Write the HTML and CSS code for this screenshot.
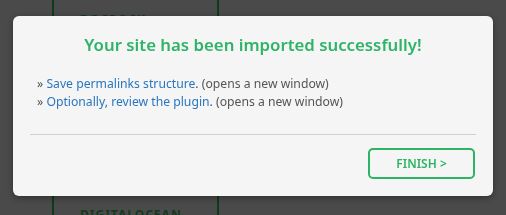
FILE: index.html
```html
<!DOCTYPE html>
<html>
<head>
<meta charset="utf-8">
<link rel="stylesheet" href="styles.css">
</head>
<body>
<div class="page">
  <div class="column">
    <div class="column-title top">DOCROCK</div>
    <div class="column-title bottom">DIGITALOCEAN</div>
  </div>
</div>
<div class="overlay">
  <div class="modal">
    <h2 class="modal-title">Your site has been imported successfully!</h2>
    <ul class="steps">
      <li>» <a href="#">Save permalinks structure</a>. (opens a new window)</li>
      <li>» <a href="#">Optionally, review the plugin</a>. (opens a new window)</li>
    </ul>
    <hr class="divider">
    <div class="actions">
      <button class="finish">FINISH &gt;</button>
    </div>
  </div>
</div>
</body>
</html>
```
FILE: styles.css
```css
html, body {
  margin: 0;
  padding: 0;
  height: 100%;
}
body {
  background: #4a4a4a;
  font-family: "Noto Sans", "Open Sans", sans-serif;
  overflow: hidden;
}
.page {
  height: 215px;
  display: flex;
}
.column {
  margin-left: 52px;
  width: 163px;
  border-left: 2px solid #0f3a1c;
  border-right: 2px solid #0f3a1c;
  display: flex;
  flex-direction: column;
  justify-content: space-between;
}
.column-title {
  color: #123a1e;
  font-weight: 700;
  font-size: 12px;
  line-height: 16px;
  letter-spacing: 1px;
  padding-left: 26px;
}
.column-title.top { margin-top: 12px; }
.column-title.bottom { margin-bottom: -8px; }
.overlay {
  position: fixed;
  inset: 0;
}
.modal {
  position: absolute;
  left: 13px;
  top: 16px;
  width: 480px;
  height: 180px;
  box-sizing: border-box;
  padding: 0 17px;
  background: #f5f5f5;
  border-radius: 6px;
  box-shadow: 0 2px 6px rgba(0,0,0,0.35);
  display: flex;
  flex-direction: column;
}
.modal-title {
  margin: 18px 0 0;
  text-align: center;
  color: #2fb467;
  font-size: 16.8px;
  font-weight: 600;
  line-height: 22px;
}
.steps {
  list-style: none;
  margin: 19px 0 0;
  padding: 0 0 0 7px;
  font-size: 12.2px;
  line-height: 18px;
  color: #555;
}
.steps a {
  color: #2a76be;
  text-decoration: none;
}
.divider {
  border: 0;
  border-top: 1px solid #cfcfcf;
  margin: 23px 0 0;
}
.actions {
  display: flex;
  justify-content: flex-end;
  margin-top: 13px;
  padding-right: 1px;
}
.finish {
  width: 107px;
  height: 31px;
  box-sizing: border-box;
  border: 2px solid #2cb464;
  border-radius: 5px;
  background: transparent;
  color: #2cb464;
  font-family: inherit;
  font-size: 12px;
  font-weight: 600;
}
```
